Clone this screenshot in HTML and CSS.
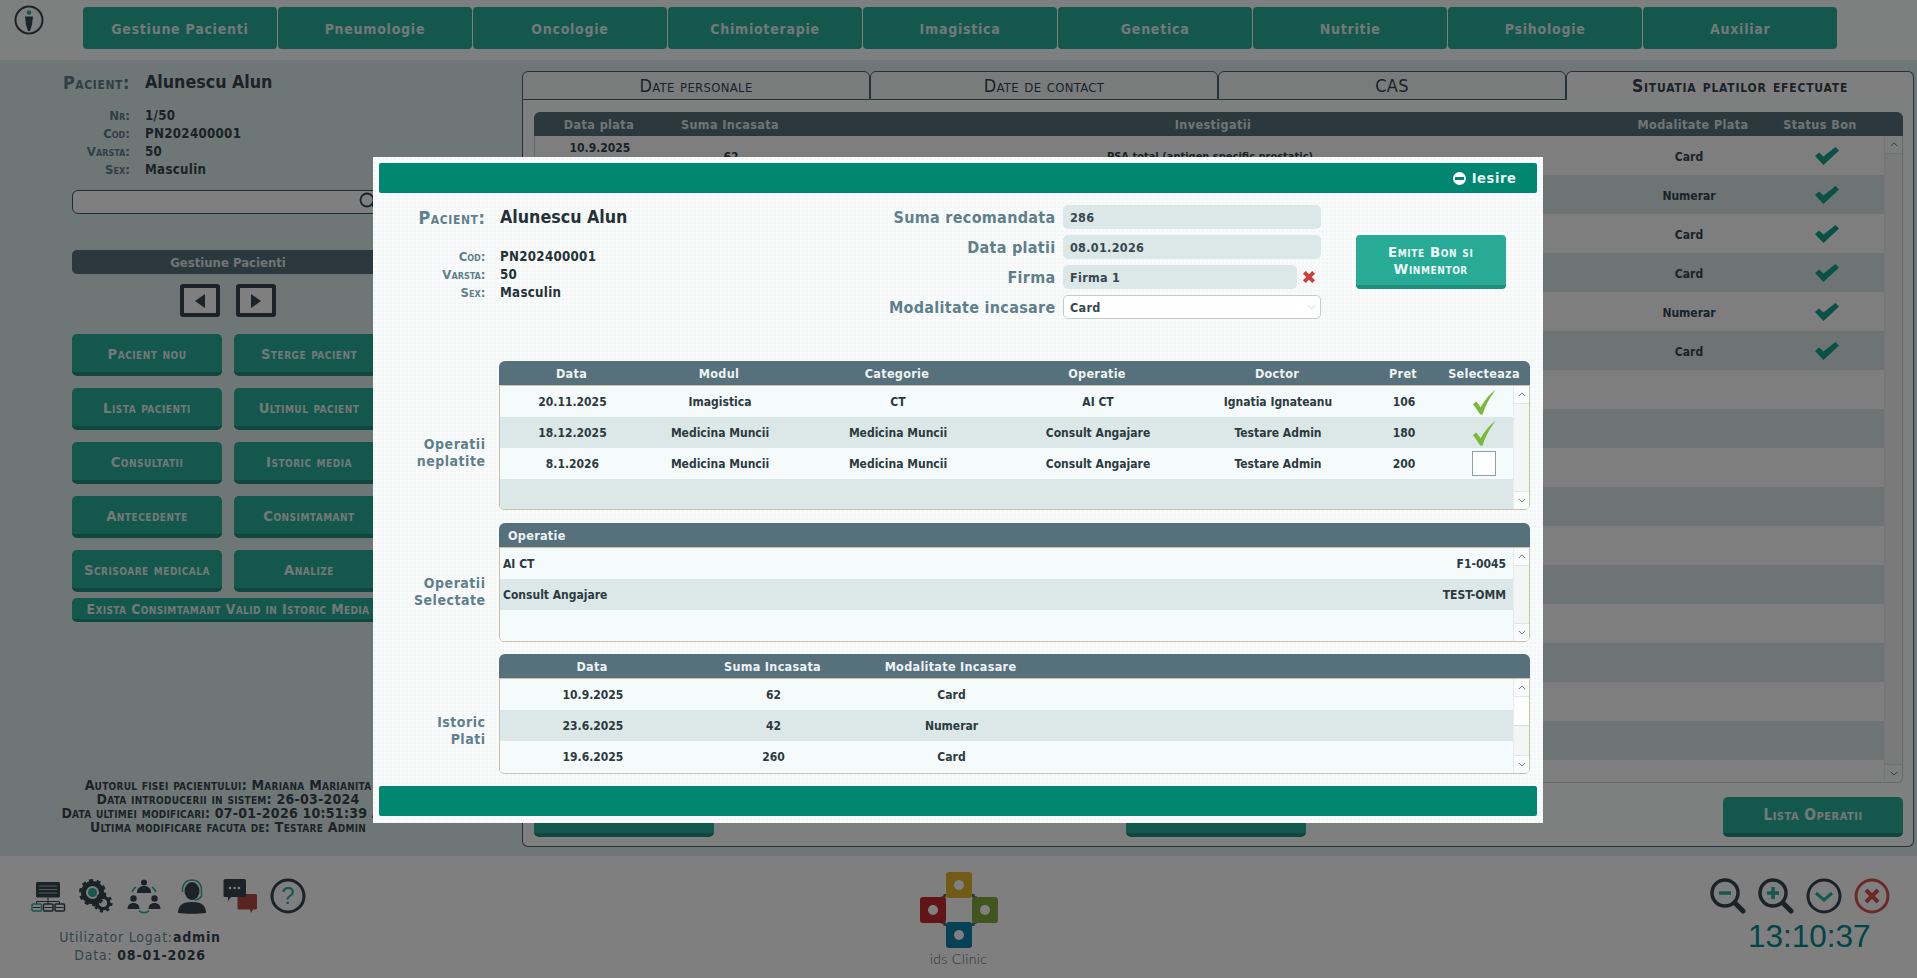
FILE: index.html
```html
<!DOCTYPE html>
<html lang="ro">
<head>
<meta charset="utf-8">
<title>ids Clinic</title>
<link rel="stylesheet" href="styles.css">
</head>
<body>
<svg class="defs" aria-hidden="true">
  <symbol id="chev-up" viewBox="0 0 10 6"><path d="M1 5l4-4 4 4" fill="none" stroke="#667" stroke-width="1.1"/></symbol>
  <symbol id="chev-down" viewBox="0 0 10 6"><path d="M1 1l4 4 4-4" fill="none" stroke="#667" stroke-width="1.1"/></symbol>
  <symbol id="ok" viewBox="0 0 24 18"><path d="M0 9l4-3.500 4.500 4L20.500 0 24 3.500 8.500 18z" fill="#12a08a"/></symbol>
  <symbol id="tick" viewBox="0 0 26 26"><path d="M1 15l3.500-2.500 4.500 6C13 11 18 5 25 0c-5.500 7-10.500 15-14 26H8.500z" fill="#7cb83a"/></symbol>
</svg>

<div class="app">
  <header class="top">
    <svg class="who" viewBox="0 0 30 30" aria-hidden="true">
      <circle cx="15" cy="15" r="13.500" fill="none" stroke="#36464d" stroke-width="2"/>
      <circle cx="15" cy="7.500" r="2.300" fill="#28b09d"/>
      <path d="M11 11.500h8l-1 8-2 6.500h-2l-2-6.500z" fill="#36464d"/>
    </svg>
    <nav class="nav">
      <a class="nav-b">Gestiune Pacienti</a>
      <a class="nav-b">Pneumologie</a>
      <a class="nav-b">Oncologie</a>
      <a class="nav-b">Chimioterapie</a>
      <a class="nav-b">Imagistica</a>
      <a class="nav-b">Genetica</a>
      <a class="nav-b">Nutritie</a>
      <a class="nav-b">Psihologie</a>
      <a class="nav-b">Auxiliar</a>
    </nav>
  </header>

  <main class="main">
    <aside class="side">
      <div class="pat-head"><span class="lab-big">Pacient:</span><span class="val-big">Alunescu Alun</span></div>
      <dl class="pat-rows">
        <dt>Nr:</dt><dd>1/50</dd>
        <dt>Cod:</dt><dd>PN202400001</dd>
        <dt>Varsta:</dt><dd>50</dd>
        <dt>Sex:</dt><dd>Masculin</dd>
      </dl>
      <div class="search">
        <span class="search-field"></span>
        <span class="search-btn"><svg class="search-ico" viewBox="0 0 20 20" aria-hidden="true"><circle cx="8" cy="8" r="6.500" fill="none" stroke="#36464d" stroke-width="1.800"/><path d="M13 13l6 6" stroke="#36464d" stroke-width="1.800"/></svg></span>
      </div>
      <div class="sec-bar">Gestiune Pacienti</div>
      <div class="arrows">
        <span class="arrow"><i class="tri tri-l"></i></span>
        <span class="arrow"><i class="tri tri-r"></i></span>
      </div>
      <div class="actions">
        <a class="btn">Pacient nou</a><a class="btn">Sterge pacient</a>
        <a class="btn">Lista pacienti</a><a class="btn">Ultimul pacient</a>
        <a class="btn">Consultatii</a><a class="btn">Istoric media</a>
        <a class="btn">Antecedente</a><a class="btn">Consimtamant</a>
        <a class="btn">Scrisoare medicala</a><a class="btn">Analize</a>
      </div>
      <div class="notice">Exista Consimtamant Valid in Istoric Media</div>
      <div class="audit">
        <div>Autorul fisei pacientului: Mariana Marianita</div>
        <div>Data introducerii in sistem: 26-03-2024</div>
        <div>Data ultimei modificari: 07-01-2026 10:51:39 AM</div>
        <div>Ultima modificare facuta de: Testare Admin</div>
      </div>
    </aside>

    <section class="panel">
      <div class="tabs">
        <span class="tab">Date personale</span>
        <span class="tab">Date de contact</span>
        <span class="tab">CAS</span>
        <span class="tab tab-on">Situatia platilor efectuate</span>
      </div>
      <div class="panel-body">
        <div class="pay-head">
          <span>Data plata</span><span>Suma Incasata</span><span>Investigatii</span><span>Modalitate Plata</span><span>Status Bon</span>
        </div>
        <div class="pay-body">
          <div class="pay-rows">
            <div class="pay-row"><span class="pay-date">10.9.2025</span><span>62</span><span class="pay-inv">PSA total (antigen specific prostatic)</span><span>Card</span><span class="pay-ok"><svg class="ok"><use href="#ok"/></svg></span></div>
            <div class="pay-row"><span></span><span></span><span></span><span>Numerar</span><span class="pay-ok"><svg class="ok"><use href="#ok"/></svg></span></div>
            <div class="pay-row"><span></span><span></span><span></span><span>Card</span><span class="pay-ok"><svg class="ok"><use href="#ok"/></svg></span></div>
            <div class="pay-row"><span></span><span></span><span></span><span>Card</span><span class="pay-ok"><svg class="ok"><use href="#ok"/></svg></span></div>
            <div class="pay-row"><span></span><span></span><span></span><span>Numerar</span><span class="pay-ok"><svg class="ok"><use href="#ok"/></svg></span></div>
            <div class="pay-row"><span></span><span></span><span></span><span>Card</span><span class="pay-ok"><svg class="ok"><use href="#ok"/></svg></span></div>
            <div class="pay-row"></div><div class="pay-row"></div><div class="pay-row"></div><div class="pay-row"></div><div class="pay-row"></div>
            <div class="pay-row"></div><div class="pay-row"></div><div class="pay-row"></div><div class="pay-row"></div><div class="pay-row"></div><div class="pay-row"></div>
          </div>
          <div class="sb sb-dim">
            <span class="sb-btn"><svg class="chev"><use href="#chev-up"/></svg></span>
            <span class="sb-track"></span>
            <span class="sb-btn"><svg class="chev"><use href="#chev-down"/></svg></span>
          </div>
        </div>
        <div class="panel-actions">
          <a class="btn btn-wide"></a>
          <a class="btn btn-wide btn-mid"></a>
          <a class="btn btn-wide btn-end">Lista Operatii</a>
        </div>
      </div>
    </section>
  </main>

  <footer class="foot">
    <div class="foot-left">
      <div class="tools">
        <svg class="tool" viewBox="0 0 36 36" aria-hidden="true">
          <rect x="6" y="4" width="24" height="15.500" rx="1.500" fill="#36464d"/>
          <path d="M9 8h18M9 11.500h18M9 15h18" stroke="#a8b4b8" stroke-width="1.200"/>
          <path d="M18 19.500v4M6.500 26v-2.500h23V26M18 23.500V26" fill="none" stroke="#36464d" stroke-width="1"/>
          <rect x="2" y="26" width="9.500" height="7" rx="1" fill="none" stroke="#28b09d" stroke-width="1.500"/>
          <rect x="13.500" y="26" width="9.500" height="7" rx="1" fill="none" stroke="#36464d" stroke-width="1.500"/>
          <rect x="25" y="26" width="9.500" height="7" rx="1" fill="none" stroke="#36464d" stroke-width="1.500"/>
          <path d="M3 29.500h7.500M14.500 29.500H22M26 29.500h7.500" stroke="#36464d" stroke-width="1"/>
        </svg>
        <svg class="tool" viewBox="0 0 36 36" aria-hidden="true">
          <circle cx="14.500" cy="14.500" r="9" fill="none" stroke="#36464d" stroke-width="5"/>
          <circle cx="14.500" cy="14.500" r="12" fill="none" stroke="#36464d" stroke-width="3" stroke-dasharray="4 3.540"/>
          <circle cx="14.500" cy="14.500" r="4.500" fill="#28b09d"/>
          <circle cx="25" cy="25" r="5.800" fill="none" stroke="#36464d" stroke-width="3.600"/>
          <circle cx="25" cy="25" r="8.400" fill="none" stroke="#36464d" stroke-width="2.400" stroke-dasharray="3 3.600"/>
        </svg>
        <svg class="tool" viewBox="0 0 36 36" aria-hidden="true">
          <circle cx="18" cy="4.500" r="3" fill="#36464d"/>
          <path d="M11 15c0-5 3-7 7-7s7 2 7 7z" fill="#36464d"/>
          <circle cx="7.500" cy="20.500" r="3.200" fill="#36464d"/>
          <path d="M1.500 31c0-4 2.500-6 6-6s6 2 6 6z" fill="#36464d"/>
          <circle cx="28.500" cy="20.500" r="3.200" fill="#36464d"/>
          <path d="M22.500 31c0-4 2.500-6 6-6s6 2 6 6z" fill="#36464d"/>
          <path d="M6 14c1-3 2-4 4-5M26 9c2 1 3 3 4 5M13 33c3 2 7 2 10 0" fill="none" stroke="#28b09d" stroke-width="1.800"/>
        </svg>
        <svg class="tool" viewBox="0 0 36 36" aria-hidden="true">
          <ellipse cx="18" cy="13" rx="7.500" ry="9" fill="#36464d"/>
          <path d="M4 35c0-8 5-11 14-11s14 3 14 11c-6 1-22 1-28 0z" fill="#36464d"/>
          <path d="M8.500 14C8 6 12 2 18 2s10 4 9.500 12v4c-2 3-4 4-7 4" fill="none" stroke="#28b09d" stroke-width="1.500"/>
        </svg>
        <svg class="tool" viewBox="0 0 36 36" aria-hidden="true">
          <path d="M19 16h14.500a1.500 1.500 0 0 1 1.500 1.500V30a1.500 1.500 0 0 1-1.500 1.500H31L29 35l-1-3.500H17a1.500 1.500 0 0 1-1.500-1.500V18z" fill="#b34a45"/>
          <path d="M3 1h19.500A1.500 1.500 0 0 1 24 2.500v15a1.500 1.500 0 0 1-1.500 1.500H9L6 23v-4H3a1.500 1.500 0 0 1-1.500-1.500v-15A1.500 1.500 0 0 1 3 1z" fill="#36464d"/>
          <circle cx="8" cy="10" r="1.300" fill="#fff"/><circle cx="12.500" cy="10" r="1.300" fill="#fff"/><circle cx="17" cy="10" r="1.300" fill="#fff"/>
        </svg>
        <svg class="tool" viewBox="0 0 36 36" aria-hidden="true">
          <circle cx="18" cy="18" r="16" fill="none" stroke="#36464d" stroke-width="3"/>
          <text x="18" y="26" class="help-q">?</text>
        </svg>
      </div>
      <div class="user">
        <div><span class="user-k">Utilizator Logat:</span><b>admin</b></div>
        <div><span class="user-k">Data: </span><b>08-01-2026</b></div>
      </div>
    </div>
    <div class="foot-mid">
      <svg class="logo" viewBox="0 0 80 80" aria-hidden="true">
        <path d="M26 24c0 3-1 4-4 4M54 24c0 3 1 4 4 4M26 56c0-3-1-4-4-4M54 56c0-3 1-4 4-4" fill="none" stroke="#5a6a70" stroke-width="3"/>
        <rect x="27" y="2" width="26" height="26" rx="3" fill="#e5b62d"/><circle cx="40" cy="15" r="5" fill="#fff"/>
        <rect x="1" y="27" width="26" height="26" rx="3" fill="#c22a2e"/><circle cx="14" cy="40" r="5" fill="#fff"/>
        <rect x="53" y="27" width="26" height="26" rx="3" fill="#82ad3d"/><circle cx="66" cy="40" r="5" fill="#fff"/>
        <rect x="27" y="52" width="26" height="26" rx="3" fill="#0c82ad"/><circle cx="40" cy="65" r="5" fill="#fff"/>
      </svg>
      <div class="logo-text">ids Clinic</div>
    </div>
    <div class="foot-right">
      <div class="tools">
        <svg class="tool" viewBox="0 0 36 36" aria-hidden="true">
          <circle cx="15" cy="15" r="13" fill="none" stroke="#36464d" stroke-width="3.500"/>
          <path d="M25 25l8 8" stroke="#36464d" stroke-width="5" stroke-linecap="round"/>
          <path d="M9 15h12" stroke="#28b09d" stroke-width="3.500"/>
        </svg>
        <svg class="tool" viewBox="0 0 36 36" aria-hidden="true">
          <circle cx="15" cy="15" r="13" fill="none" stroke="#36464d" stroke-width="3.500"/>
          <path d="M25 25l8 8" stroke="#36464d" stroke-width="5" stroke-linecap="round"/>
          <path d="M9 15h12M15 9v12" stroke="#28b09d" stroke-width="3.500"/>
        </svg>
        <svg class="tool" viewBox="0 0 36 36" aria-hidden="true">
          <circle cx="18" cy="18" r="16" fill="none" stroke="#36464d" stroke-width="3"/>
          <path d="M10 15l8 7 8-7" fill="none" stroke="#28b09d" stroke-width="3"/>
        </svg>
        <svg class="tool" viewBox="0 0 36 36" aria-hidden="true">
          <circle cx="18" cy="18" r="16" fill="none" stroke="#d9534f" stroke-width="3"/>
          <path d="M12 12l12 12M24 12L12 24" stroke="#d9534f" stroke-width="4"/>
        </svg>
      </div>
      <div class="clock">13:10:37</div>
    </div>
  </footer>
</div>

<div class="overlay"></div>

<div class="modal">
  <div class="m-bar"><span class="exit"><i class="exit-ico"></i>Iesire</span></div>
  <div class="m-top">
    <div class="m-pat">
      <div class="m-pat-head"><span class="lab-big">Pacient:</span><span class="val-big">Alunescu Alun</span></div>
      <dl class="m-pat-rows">
        <dt>Cod:</dt><dd>PN202400001</dd>
        <dt>Varsta:</dt><dd>50</dd>
        <dt>Sex:</dt><dd>Masculin</dd>
      </dl>
    </div>
    <div class="m-form">
      <label class="f-lab">Suma recomandata</label><div class="f-in">286</div>
      <label class="f-lab">Data platii</label><div class="f-in">08.01.2026</div>
      <label class="f-lab">Firma</label><div class="f-firm"><div class="f-in f-grow">Firma 1</div><svg class="f-x" viewBox="0 0 12 12" aria-hidden="true"><path d="M2 2l8 8M10 2l-8 8" stroke="#c9403c" stroke-width="3.400"/></svg></div>
      <label class="f-lab">Modalitate incasare</label><div class="f-sel">Card<svg class="f-chev" viewBox="0 0 10 6" aria-hidden="true"><path d="M1 1l4 4 4-4" fill="none" stroke="#c6cccc" stroke-width="1"/></svg></div>
    </div>
    <a class="emit">Emite Bon si Winmentor</a>
  </div>

  <div class="m-sec">
    <div class="sec-lab lab-a">Operatii<br>neplatite</div>
    <div class="tbl tbl-a">
      <div class="t-head cols-a"><span>Data</span><span>Modul</span><span>Categorie</span><span>Operatie</span><span>Doctor</span><span>Pret</span><span>Selecteaza</span></div>
      <div class="t-body">
        <div class="t-rows">
          <div class="t-row cols-a"><span>20.11.2025</span><span>Imagistica</span><span>CT</span><span>AI CT</span><span>Ignatia Ignateanu</span><span>106</span><span class="pick"><svg class="tick"><use href="#tick"/></svg></span></div>
          <div class="t-row cols-a"><span>18.12.2025</span><span>Medicina Muncii</span><span>Medicina Muncii</span><span>Consult Angajare</span><span>Testare Admin</span><span>180</span><span class="pick"><svg class="tick"><use href="#tick"/></svg></span></div>
          <div class="t-row cols-a"><span>8.1.2026</span><span>Medicina Muncii</span><span>Medicina Muncii</span><span>Consult Angajare</span><span>Testare Admin</span><span>200</span><span class="pick"><i class="box"></i></span></div>
          <div class="t-row t-fill"></div>
        </div>
        <div class="sb">
          <span class="sb-btn"><svg class="chev"><use href="#chev-up"/></svg></span>
          <span class="sb-track"></span>
          <span class="sb-btn"><svg class="chev"><use href="#chev-down"/></svg></span>
        </div>
      </div>
    </div>
  </div>

  <div class="m-sec">
    <div class="sec-lab lab-b">Operatii<br>Selectate</div>
    <div class="tbl tbl-b">
      <div class="t-head t-head-left"><span>Operatie</span></div>
      <div class="t-body">
        <div class="t-rows">
          <div class="t-row cols-b"><span>AI CT</span><span>F1-0045</span></div>
          <div class="t-row cols-b"><span>Consult Angajare</span><span>TEST-OMM</span></div>
          <div class="t-row t-fill"></div>
        </div>
        <div class="sb">
          <span class="sb-btn"><svg class="chev"><use href="#chev-up"/></svg></span>
          <span class="sb-track"></span>
          <span class="sb-btn"><svg class="chev"><use href="#chev-down"/></svg></span>
        </div>
      </div>
    </div>
  </div>

  <div class="m-sec">
    <div class="sec-lab lab-c">Istoric<br>Plati</div>
    <div class="tbl tbl-c">
      <div class="t-head cols-c"><span>Data</span><span>Suma Incasata</span><span>Modalitate Incasare</span><span></span></div>
      <div class="t-body">
        <div class="t-rows">
          <div class="t-row cols-c"><span>10.9.2025</span><span>62</span><span>Card</span><span></span></div>
          <div class="t-row cols-c"><span>23.6.2025</span><span>42</span><span>Numerar</span><span></span></div>
          <div class="t-row cols-c"><span>19.6.2025</span><span>260</span><span>Card</span><span></span></div>
        </div>
        <div class="sb">
          <span class="sb-btn"><svg class="chev"><use href="#chev-up"/></svg></span>
          <span class="sb-track"><i class="sb-thumb"></i></span>
          <span class="sb-btn"><svg class="chev"><use href="#chev-down"/></svg></span>
        </div>
      </div>
    </div>
  </div>

  <div class="m-bar m-bar-foot"></div>
</div>
</body>
</html>
```

FILE: styles.css
```css
* { box-sizing: border-box; }
html, body { margin: 0; height: 100%; }
body {
  position: relative;
  overflow: hidden;
  background: #fff;
  color: #37474f;
  font-family: "DejaVu Sans", "Liberation Sans", sans-serif;
  font-stretch: condensed;
  font-size: 12px;
}
.defs { position: absolute; width: 0; height: 0; }
.app { display: flex; flex-direction: column; height: 978px; }

/* Top bar */
.top { display: flex; height: 60px; flex: none; background: #fdfefe; padding-left: 14px; }
.who { width: 30px; height: 30px; margin-top: 5px; flex: none; }
.nav { display: flex; gap: 1.300px; margin-left: 39px; margin-top: 7px; }
.nav-b {
  width: 193.750px; height: 42px; padding-top: 1px;
  display: flex; align-items: center; justify-content: center;
  background: #28ae9a; border-radius: 4px;
  color: #e4f2ef; font-weight: 700; font-size: 14px; letter-spacing: .75px;
}

/* Main */
.main {
  display: flex; height: 796px; flex: none;
  background-color: #dfecec;
}
.side { width: 522px; flex: none; }
.pat-head { display: flex; height: 24px; margin-top: 10px; align-items: center; }
.lab-big {
  width: 130px; text-align: right; color: #5f808b;
  font-variant: small-caps; font-weight: 700; font-size: 17.800px; letter-spacing: .6px;
}
.val-big { margin-left: 15px; font-weight: 700; font-size: 17.700px; color: #37474f; }
.pat-rows {
  display: grid; grid-template-columns: 130px 1fr; column-gap: 15px; grid-auto-rows: 18px;
  margin: 12px 0 0; align-items: center;
}
.pat-rows dt, .m-pat-rows dt {
  text-align: right; color: #5f808b; font-variant: small-caps; font-weight: 700; font-size: 13px;
}
.pat-rows dd, .m-pat-rows dd { margin: 0; font-weight: 700; font-size: 13.200px; letter-spacing: .3px; }

.search {
  display: flex; margin: 12px 0 0 72px; width: 307px; height: 24px;
  background: #fff; border: 1px solid #42565e; border-radius: 6px; overflow: hidden;
}
.search-field { flex: 1; }
.search-btn { width: 19px; display: flex; align-items: center; }
.search-ico { width: 20px; height: 20px; flex: none; }

.sec-bar {
  margin: 36px 0 0 72px; width: 312px; height: 24px;
  display: flex; align-items: center; justify-content: center;
  background: #56707c; border-radius: 5px;
  color: #dfe9ec; font-weight: 700; font-size: 13px;
}
.arrows { display: flex; justify-content: flex-start; gap: 16px; margin: 10px 0 0 180px; }
.arrow {
  width: 40px; height: 33px;
  display: flex; align-items: center; justify-content: center;
  border: 4px solid #37474f; border-radius: 3px; background: #fff;
}
.tri { width: 0; height: 0; border-style: solid; border-color: transparent; }
.tri-l { border-width: 7px 10px 7px 0; border-right-color: #37474f; }
.tri-r { border-width: 7px 0 7px 10px; border-left-color: #37474f; }

.actions {
  display: grid; grid-template-columns: 150px 150px; column-gap: 12px; row-gap: 12px;
  margin: 17px 0 0 72px; width: 312px; grid-auto-rows: 42px;
}
.btn {
  display: flex; align-items: center; justify-content: center;
  background: #28ae9a; border-radius: 5px; border-bottom: 4px solid #1e8e7c;
  color: #e4f2ef; font-variant: small-caps; font-weight: 700; font-size: 14.600px; letter-spacing: .5px;
}
.notice {
  margin: 6px 0 0 72px; width: 312px; height: 24px;
  display: flex; align-items: center; justify-content: center;
  background: #28ae9a; border-radius: 5px; border-bottom: 3px solid #1e8e7c;
  color: #e4f2ef; font-variant: small-caps; font-weight: 700; font-size: 13.800px; letter-spacing: .4px;
  white-space: nowrap;
}
.audit {
  margin-top: 156px; width: 456px; text-align: center;
  font-variant: small-caps; font-weight: 700; font-size: 14px; line-height: 14px; letter-spacing: .25px;
  white-space: nowrap;
}

/* Tab panel */
.panel { width: 1392px; flex: none; margin-top: 11px; height: 776px; display: flex; flex-direction: column; }
.tabs { display: flex; height: 29px; flex: none; }
.tab {
  flex: 1; display: flex; align-items: center; justify-content: center;
  border: 1px solid #4c626c; border-radius: 6px 6px 0 0;
  background: #f4f8f8; color: #37474f;
  font-variant: small-caps; font-size: 18px; letter-spacing: .3px;
}
.tab-on { border-bottom: 0; background: #fff; font-weight: 700; font-size: 17.400px; letter-spacing: .8px; }
.panel-body {
  flex: 1; display: flex; flex-direction: column; padding: 12px 10px 9px 11px;
  border: 1px solid #4c626c; border-top: 0; border-radius: 0 0 6px 6px; background: #fdfefe;
}
.pay-head {
  flex: none; display: grid; grid-template-columns: 130px 132px 834px 126px 128px; height: 24px; align-items: center;
  background: #56707c; border-radius: 6px 6px 0 0;
  color: #dfe9ec; font-weight: 700; font-size: 12.500px; text-align: center; letter-spacing: .4px;
}
.pay-body { height: 647px; flex: none; display: flex; border: 1px solid #c9d3d3; border-top: 0; border-radius: 0 0 6px 6px; overflow: hidden; }
.pay-rows { flex: 1; overflow: hidden; }
.pay-row {
  display: grid; grid-template-columns: 130px 132px 834px 116px 1fr; height: 39px; padding-top: 2px; align-items: center; text-align: center;
  font-weight: 700; font-size: 12px; position: relative;
}
.pay-row:nth-child(odd) { background: #fafdfb; }
.pay-row:nth-child(even) { background: #dbe9e7; }
.pay-date { align-self: start; margin-top: 3px; }
.pay-inv { font-size: 11px; padding-right: 8px; }
.pay-ok { padding-left: 22px; margin-top: -2px; display: flex; justify-content: center; }
.ok { width: 24px; height: 18px; }
.panel-actions { display: flex; height: 40px; margin-top: 14px; flex: none; }
.btn-wide { width: 180px; height: 40px; font-size: 15.300px; }
.btn-mid { margin-left: 412px; }
.btn-end { margin-left: auto; }

/* Footer */
.foot { flex: 1; display: grid; grid-template-columns: 1fr 1fr 1fr; background: #fff; min-height: 0; }
.foot-left { padding: 22px 0 0 30px; }
.tools { display: flex; gap: 12px; }
.tool { width: 36px; height: 36px; flex: none; }
.help-q { font-family: "Liberation Sans", sans-serif; font-size: 24px; fill: #28b09d; text-anchor: middle; }
.user {
  width: 220px; margin: 14px 0 0 0; text-align: center;
  font-size: 14px; line-height: 18px; letter-spacing: .8px; color: #37474f;
}
.user-k { color: #6d8791; font-weight: 400; }
.foot-mid { display: flex; flex-direction: column; align-items: center; padding-top: 14px; }
.logo { width: 80px; height: 80px; }
.logo-text { font-family: Lato, sans-serif; font-stretch: normal; font-weight: 300; font-size: 14px; line-height: 17px; color: #667; letter-spacing: .4px; }
.foot-right { display: flex; flex-direction: column; align-items: flex-end; padding: 22px 27px 0 0; }
.clock {
  width: 160px; margin: 4px -1px 0 0; text-align: left; padding-left: 17px;
  align-self: flex-end;
  font-family: "Liberation Sans", sans-serif; font-stretch: normal; font-size: 31.500px; line-height: 36px; color: #008d8f;
}

/* Overlay and modal */
.overlay { position: absolute; inset: 0; background: rgba(0, 0, 0, .5); }
.modal {
  position: absolute; left: 373px; top: 157px; width: 1170px; height: 666px;
  padding: 6px 6.500px 6px 6px;
  background-color: #f9fbfb;
  background-image: radial-gradient(#f3f6f6 1px, transparent 1px);
  background-size: 4px 4px;
  color: #263238;
}
.m-bar {
  height: 30px; background: #008671; border-radius: 2px;
  display: flex; align-items: center; justify-content: flex-end;
}
.m-bar-foot { margin-top: 12px; }
.exit { display: flex; align-items: center; gap: 6px; padding-right: 20px; color: #e8f5f2; font-weight: 700; font-size: 14.500px; letter-spacing: .6px; }
.exit-ico {
  width: 13px; height: 13px; border-radius: 50%; background: #fff; position: relative;
}
.exit-ico::after { content: ""; position: absolute; left: 2px; right: 2px; top: 5px; height: 3px; background: #008671; }

.m-top { display: flex; height: 168px; }
.m-pat { width: 471.500px; flex: none; padding-top: 12px; }
.m-pat-head { display: flex; align-items: center; height: 24px; }
.m-pat-head .lab-big { width: 106.500px; }
.m-pat-head .val-big { margin-left: 14.500px; color: #263238; }
.m-pat-rows {
  display: grid; grid-template-columns: 106.500px 1fr; column-gap: 14.500px; grid-auto-rows: 18px;
  margin: 18px 0 0; align-items: center;
}
.m-form {
  display: grid; grid-template-columns: 205px 257.500px; column-gap: 7.500px; grid-auto-rows: 24px; row-gap: 6px;
  padding-top: 12px; align-content: start; flex: none;
}
.f-lab { text-align: right; align-self: center; padding-top: 1px; color: #5f808b; font-weight: 700; font-size: 16px; letter-spacing: .3px; white-space: nowrap; }
.f-in {
  display: flex; align-items: center; padding-left: 7px; background: #dce8e7; border-radius: 5px;
  font-weight: 700; font-size: 12.500px; letter-spacing: .3px; color: #37474f;
}
.f-firm { display: flex; align-items: center; }
.f-grow { width: 233.500px; height: 24px; flex: none; }
.f-x { width: 14px; height: 14px; margin-left: 5px; }
.f-sel {
  display: flex; align-items: center; justify-content: space-between; padding: 0 4px 0 6px;
  background: #fff; border: 1px solid #c5cccc; border-radius: 5px;
  font-weight: 700; font-size: 12.500px; letter-spacing: .3px; color: #37474f;
}
.f-chev { width: 9px; height: 6px; }
.emit {
  margin: 42px 0 0 35.500px; width: 149.500px; height: 54px; flex: none;
  display: flex; align-items: center; justify-content: center; text-align: center; padding: 0 12px;
  background: #27ab96; border-radius: 4px; border-bottom: 4px solid #1e8e7c;
  color: #eef8f6; font-variant: small-caps; font-weight: 700; font-size: 14.800px; line-height: 17px; letter-spacing: .6px;
}

.m-sec { display: flex; margin-bottom: 12px; }
.sec-lab {
  width: 106.500px; flex: none; margin-right: 13.500px; text-align: right;
  color: #5f808b; font-weight: 700; font-size: 14px; line-height: 17px; letter-spacing: .5px;
}
.lab-a { margin-top: 75px; }
.lab-b { margin-top: 52px; }
.lab-c { margin-top: 60px; }
.tbl { width: 1031px; flex: none; display: flex; flex-direction: column; }
.tbl-a { height: 149px; margin-bottom: 1px; }
.tbl-b { height: 119px; }
.tbl-c { height: 120px; }
.t-head {
  height: 24px; flex: none; display: grid; align-items: center; text-align: center;
  background: #56707c; border-radius: 6px 6px 0 0; border-bottom: 0;
  color: #eef3f4; font-weight: 700; font-size: 12.500px; letter-spacing: .3px;
}
.t-head.cols-a span:last-child { padding-right: 8px; }
.t-head-left { text-align: left; padding-left: 9px; }
.cols-a { grid-template-columns: 145px 150px 206px 194px 166px 86px 1fr; }
.cols-b { grid-template-columns: 1fr auto; }
.cols-c { grid-template-columns: 186px 175px 181px 1fr; }
.t-body {
  flex: 1; min-height: 0; display: flex;
  border: 1px solid #c9c2ae; border-top-width: 1px; border-radius: 0 0 5px 5px; overflow: hidden;
}
.t-rows { flex: 1; display: flex; flex-direction: column; min-width: 0; }
.t-row {
  height: 31px; flex: none; display: grid; align-items: center; text-align: center;
  font-weight: 700; font-size: 12px; color: #2c3a40;
}
.t-row.cols-b { padding: 0 7px 0 3px; text-align: left; }
.t-row.cols-b span:last-child { text-align: right; }
.t-row:nth-child(odd) { background: #f5fbfb; }
.t-row:nth-child(even) { background: #dce8e7; }
.t-fill { flex: 1; height: auto; }
.pick { display: flex; justify-content: center; padding-left: 8px; }
.tick { width: 25px; height: 26px; }
.box { width: 24px; height: 25px; background: #fff; border: 1px solid #8d9fa6; }

.sb { width: 16px; flex: none; display: flex; flex-direction: column; background: #f4f6f6; border-left: 1px solid #e8ecec; }
.sb-btn { height: 17px; flex: none; display: flex; align-items: center; justify-content: center; background: #fafcfc; }
.chev { width: 8px; height: 5px; }
.sb-track { flex: 1; position: relative; background: #f4f5f5; border-top: 1px solid #e2e6e6; border-bottom: 1px solid #e2e6e6; }
.sb-thumb { position: absolute; left: 0; right: 0; top: 0; height: 29px; background: #fff; border-bottom: 1px solid #d8dcdc; }
.sb-dim { width: 18px; }
```
